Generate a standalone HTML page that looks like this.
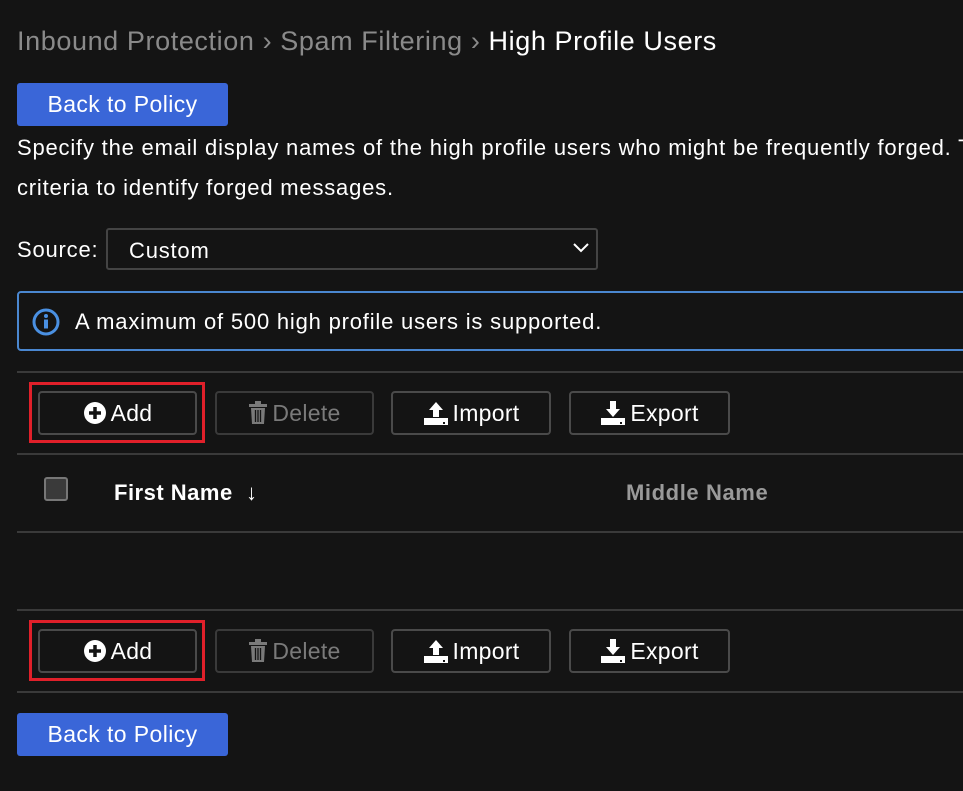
<!DOCTYPE html>
<html><head><style>
body{margin:0;background:#141414;color:#fff;font-family:"Liberation Sans",sans-serif;width:963px;height:791px;overflow:hidden;position:relative}
.a{position:absolute;white-space:nowrap}
.bc{left:17px;top:26px;font-size:27px;letter-spacing:0.6px;color:#8a8a8a}
.bc b{font-weight:normal;color:#fff}
.blue{background:#3a66d8;border-radius:3px;width:211px;height:43px;font-size:23px;letter-spacing:0.4px;line-height:43px;text-align:center;color:#fff}
.t{font-size:22px;letter-spacing:0.8px;color:#fff}
.line{left:17px;width:946px;height:2px;background:#3a3a3a}
.btn{border:2px solid #4a4a4a;border-radius:4px;box-sizing:border-box;height:44px;font-size:23px;letter-spacing:0.3px;line-height:40px;text-align:center;display:flex;align-items:center;justify-content:center;gap:4px}
.red{border:3px solid #e0202a;width:176px;height:61px;box-sizing:border-box;left:29px}
</style></head><body>
<div class="a bc">Inbound Protection › Spam Filtering › <b>High Profile Users</b></div>
<div class="a blue" style="left:17px;top:83px">Back to Policy</div>
<div class="a t" style="left:17px;top:135px">Specify the email display names of the high profile users who might be frequently forged. The</div>
<div class="a t" style="left:17px;top:175px">criteria to identify forged messages.</div>
<div class="a t" style="left:17px;top:237px">Source:</div>
<div class="a" style="left:106px;top:228px;width:492px;height:42px;box-sizing:border-box;border:2px solid #444;border-radius:3px"></div>
<div class="a t" style="left:129px;top:238px">Custom</div>
<svg class="a" style="left:572px;top:242px" width="18" height="12"><path d="M2 2l7 7 7-7" stroke="#fff" stroke-width="2" fill="none"/></svg>
<div class="a" style="left:17px;top:291px;width:960px;height:60px;box-sizing:border-box;border:2px solid #4a87d0;border-radius:4px"></div>
<svg class="a" style="left:31px;top:307px" width="30" height="30"><circle cx="15" cy="15" r="12" stroke="#4a90e2" stroke-width="3" fill="none"/><circle cx="15" cy="9" r="2" fill="#4a90e2"/><rect x="13" y="12.5" width="4" height="9" fill="#4a90e2"/></svg>
<div class="a t" style="left:75px;top:309px">A maximum of 500 high profile users is supported.</div>

<div class="a line" style="top:371px"></div>
<div class="a line" style="top:453px"></div>
<div class="a line" style="top:531px"></div>
<div class="a line" style="top:609px"></div>
<div class="a line" style="top:691px"></div>

<div class="a" style="left:44px;top:477px;width:24px;height:24px;box-sizing:border-box;border:2px solid #777;border-radius:3px;background:#3a3a3a"></div>
<div class="a" style="left:114px;top:480px;font-size:22px;letter-spacing:0.5px;font-weight:bold">First Name &nbsp;<span style="font-weight:normal">↓</span></div>
<div class="a" style="left:626px;top:480px;font-size:22px;letter-spacing:0.6px;font-weight:bold;color:#9a9a9a">Middle Name</div>

<div class="a red" style="top:382px"></div>
<div class="a red" style="top:620px"></div>

<div class="a btn" style="left:38px;top:391px;width:159px"><svg width="24" height="24"><circle cx="12" cy="12" r="11" fill="#fff"/><path d="M12 6v12M6 12h12" stroke="#141414" stroke-width="3.5"/></svg>Add</div>
<div class="a btn" style="left:215px;top:391px;width:159px;color:#7a7a7a;border-color:#3a3a3a"><svg width="20" height="24"><rect x="1" y="3" width="18" height="3" fill="#7a7a7a"/><rect x="7" y="0" width="6" height="3" fill="#7a7a7a"/><path d="M3 7h14l-1 16H4z" fill="#7a7a7a"/><path d="M7.5 9v12M10 9v12M12.5 9v12" stroke="#141414" stroke-width="1.3"/></svg>Delete</div>
<div class="a btn" style="left:391px;top:391px;width:160px"><svg width="26" height="26"><path d="M13 2l7 8h-4v7h-6v-7H6z" fill="#fff"/><rect x="1" y="18" width="24" height="7" fill="#fff"/><rect x="20" y="22" width="2" height="2" fill="#141414"/></svg>Import</div>
<div class="a btn" style="left:569px;top:391px;width:161px"><svg width="26" height="26"><path d="M10 1h6v8h4l-7 8-7-8h4z" fill="#fff"/><rect x="1" y="18" width="24" height="7" fill="#fff"/><rect x="20" y="22" width="2" height="2" fill="#141414"/></svg>Export</div>

<div class="a btn" style="left:38px;top:629px;width:159px"><svg width="24" height="24"><circle cx="12" cy="12" r="11" fill="#fff"/><path d="M12 6v12M6 12h12" stroke="#141414" stroke-width="3.5"/></svg>Add</div>
<div class="a btn" style="left:215px;top:629px;width:159px;color:#7a7a7a;border-color:#3a3a3a"><svg width="20" height="24"><rect x="1" y="3" width="18" height="3" fill="#7a7a7a"/><rect x="7" y="0" width="6" height="3" fill="#7a7a7a"/><path d="M3 7h14l-1 16H4z" fill="#7a7a7a"/><path d="M7.5 9v12M10 9v12M12.5 9v12" stroke="#141414" stroke-width="1.3"/></svg>Delete</div>
<div class="a btn" style="left:391px;top:629px;width:160px"><svg width="26" height="26"><path d="M13 2l7 8h-4v7h-6v-7H6z" fill="#fff"/><rect x="1" y="18" width="24" height="7" fill="#fff"/><rect x="20" y="22" width="2" height="2" fill="#141414"/></svg>Import</div>
<div class="a btn" style="left:569px;top:629px;width:161px"><svg width="26" height="26"><path d="M10 1h6v8h4l-7 8-7-8h4z" fill="#fff"/><rect x="1" y="18" width="24" height="7" fill="#fff"/><rect x="20" y="22" width="2" height="2" fill="#141414"/></svg>Export</div>

<div class="a blue" style="left:17px;top:713px">Back to Policy</div>
</body></html>
